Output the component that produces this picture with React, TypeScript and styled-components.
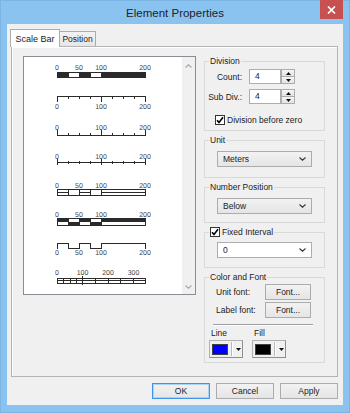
import React from 'react'
import styled, { createGlobalStyle } from 'styled-components'

const uiFont = "'Liberation Sans', Arial, sans-serif"
const ink = '#2a2a2a'

const GlobalStyle = createGlobalStyle`
  html, body {
    margin: 0;
    padding: 0;
  }
  body {
    font-family: ${uiFont};
    font-size: 8.5px;
    color: #1b1b1b;
    background: #8bc3f0;
  }
`

const Window = styled.div`
  width: 350px;
  height: 413px;
  box-sizing: border-box;
  display: flex;
  flex-direction: column;
  background: #8bc3f0;
  border: 1px solid #7cb4e3;
  padding: 0 6px 7px;
`

const TitleBar = styled.div`
  flex: none;
  height: 23px;
  display: grid;
  grid-template-columns: 1fr auto 1fr;
  align-items: start;
`

const Title = styled.div`
  grid-column: 2;
  align-self: center;
  font-size: 11.5px;
  line-height: 14px;
  color: #222;
`

const CloseButton = styled.div`
  grid-column: 3;
  justify-self: end;
  width: 23px;
  height: 19px;
  margin-top: -1px;
  background: #c75050;
  display: flex;
  align-items: center;
  justify-content: center;
`

const Client = styled.div`
  flex: 1;
  display: flex;
  flex-direction: column;
  background: #f0f0f0;
  padding: 5px 5px 6px 4px;
`

const TabStrip = styled.div`
  flex: none;
  height: 17px;
  display: flex;
  align-items: flex-end;
  margin-left: -1px;
  position: relative;
  z-index: 1;
`

const Tab = styled.div<{ $active?: boolean }>`
  box-sizing: border-box;
  display: flex;
  align-items: center;
  justify-content: center;
  border: 1px solid #acacac;
  border-bottom: 0;
  width: ${(p) => (p.$active ? 50 : 36)}px;
  height: ${(p) => (p.$active ? 18 : 15)}px;
  margin-bottom: ${(p) => (p.$active ? -1 : 0)}px;
  font-size: ${(p) => (p.$active ? 9 : 8.5)}px;
  background: ${(p) => (p.$active ? '#fff' : 'linear-gradient(#f2f2f2, #e6e6e6)')};
  & + & {
    border-left: 0;
  }
`

const Panel = styled.div`
  flex: none;
  height: 331px;
  box-sizing: border-box;
  border: 1px solid #b4b4b4;
  box-shadow: inset 1px 1px 0 #fff;
  display: flex;
  gap: 8px;
  padding: 9px 12px 0 11px;
`

const Preview = styled.div`
  width: 173px;
  height: 239px;
  box-sizing: border-box;
  border: 1px solid #8a8d94;
  background: #fff;
  display: flex;
  overflow: hidden;
`

const BarList = styled.div`
  flex: 1;
  display: flex;
  flex-direction: column;
  padding: 5px 0 0 26px;
`

const BarSvg = styled.svg`
  display: block;
  opacity: 0.995;
`

const ScrollTrack = styled.div`
  width: 13px;
  background: #f0f0f0;
  display: flex;
  flex-direction: column;
  justify-content: space-between;
  align-items: center;
  padding: 7px 0 5px;
`

const RightCol = styled.div`
  width: 121px;
  display: flex;
  flex-direction: column;
  gap: 4px;
`

const Group = styled.fieldset<{ $h: number }>`
  margin: 0;
  padding: 0;
  min-width: 0;
  box-sizing: border-box;
  height: ${(p) => p.$h}px;
  border: 1px solid #d9d9d9;
`

const Legend = styled.legend`
  margin-left: 4px;
  padding: 0 1px;
  line-height: 10px;
  display: flex;
  align-items: center;
  gap: 2px;
`

const GroupBody = styled.div<{ $pad: string }>`
  padding: ${(p) => p.$pad};
`

const SpinRow = styled.div`
  display: grid;
  grid-template-columns: 44px 32px 14px;
  align-items: center;
  height: 15px;
  & + & {
    margin-top: 5px;
  }
`

const FieldLabel = styled.span`
  grid-column: 1;
  text-align: right;
  margin: 0 7px 0 -10px;
  white-space: nowrap;
`

const TextField = styled.div`
  grid-column: 2;
  height: 15px;
  box-sizing: border-box;
  border: 1px solid #abadb3;
  background: #fff;
  padding-left: 5px;
  line-height: 13px;
`

const Spin = styled.div`
  grid-column: 3;
  height: 15px;
  display: flex;
  flex-direction: column;
`

const SpinButton = styled.div`
  flex: 1;
  box-sizing: border-box;
  border: 1px solid #acacac;
  background: linear-gradient(#f6f6f6, #e3e3e3);
  display: flex;
  align-items: center;
  justify-content: center;
  & + & {
    border-top: 0;
  }
`

const CheckRow = styled.div`
  display: flex;
  align-items: center;
  gap: 2px;
  height: 12px;
  margin-top: 10px;
  padding-left: 10px;
`

const Box = styled.span`
  width: 10px;
  height: 10px;
  box-sizing: border-box;
  border: 1px solid #333;
  background: #fff;
  display: flex;
  align-items: center;
  justify-content: center;
`

const Combo = styled.div<{ $editable?: boolean }>`
  height: 16px;
  box-sizing: border-box;
  border: 1px solid ${(p) => (p.$editable ? '#abadb3' : '#acacac')};
  background: ${(p) => (p.$editable ? '#fff' : 'linear-gradient(#f2f2f2, #e5e5e5)')};
  display: flex;
  align-items: center;
  justify-content: space-between;
  padding: 0 5px;
`

const FontGrid = styled.div`
  display: grid;
  grid-template-columns: 49px 46px;
  row-gap: 2px;
  align-items: center;
  padding: 2px 0 0 11px;
`

const PushButton = styled.div<{ $w: number; $default?: boolean }>`
  width: ${(p) => p.$w}px;
  height: 16px;
  box-sizing: border-box;
  border: 1px solid ${(p) => (p.$default ? '#3f95e6' : '#acacac')};
  box-shadow: ${(p) => (p.$default ? 'inset 0 0 0 1px #a9d3f7' : 'none')};
  background: linear-gradient(#f2f2f2, #e5e5e5);
  display: flex;
  align-items: center;
  justify-content: center;
`

const Separator = styled.div`
  margin: 6px 11px 0 8px;
  border-top: 1px solid #a0a0a0;
  border-bottom: 1px solid #fff;
`

const ColorGrid = styled.div`
  display: grid;
  grid-template-columns: 34px 34px;
  column-gap: 9px;
  row-gap: 2px;
  padding: 2px 0 0 4px;
  span {
    line-height: 10px;
    padding-left: 2px;
  }
`

const ColorButton = styled.div`
  height: 18px;
  box-sizing: border-box;
  border: 1px solid #b0b0b0;
  border-right-color: #8f8f8f;
  border-bottom-color: #8f8f8f;
  background: #f0f0f0;
  display: flex;
  align-items: center;
  padding: 0 0 0 2px;
`

const Swatch = styled.span<{ $color: string }>`
  width: 16px;
  height: 11px;
  box-sizing: border-box;
  border: 1px solid #404040;
  background: ${(p) => p.$color};
`

const SwatchArrow = styled.span`
  flex: 1;
  align-self: stretch;
  margin: 1px 0 1px 3px;
  border-left: 1px solid #b8b8b8;
  box-shadow: inset 1px 0 0 #fff;
  display: flex;
  align-items: center;
  justify-content: center;
`

const ButtonRow = styled.div`
  flex: none;
  margin-top: 6px;
  display: flex;
  justify-content: flex-end;
  gap: 6px;
`

const BarLabel = styled.text`
  font-family: ${uiFont};
  font-size: 7px;
  fill: #444;
  shape-rendering: auto;
  text-rendering: geometricPrecision;
`

const Chevron = ({ up, color = '#333' }: { up?: boolean; color?: string }) => (
  <svg width="7" height="4" viewBox="0 0 7 4">
    <path
      d={up ? 'M0.5 3.5 L3.5 0.8 L6.5 3.5' : 'M0.5 0.5 L3.5 3.2 L6.5 0.5'}
      fill="none"
      stroke={color}
      strokeWidth="1.1"
    />
  </svg>
)

const Triangle = ({ up }: { up?: boolean }) => (
  <svg width="5" height="3" viewBox="0 0 5 3">
    <polygon points={up ? '0,3 2.5,0 5,3' : '0,0 5,0 2.5,3'} fill="#111" />
  </svg>
)

const CheckBox = () => (
  <Box>
    <svg width="8" height="8" viewBox="0 0 8 8">
      <path d="M1 4.2 L3 6.4 L7 1.2" fill="none" stroke="#000" strokeWidth="1.6" />
    </svg>
  </Box>
)

const Labels = ({ y, items }: { y: number; items: [number, string][] }) => (
  <>
    {items.map(([x, t]) => (
      <BarLabel key={t} x={x} y={y} textAnchor="middle">
        {t}
      </BarLabel>
    ))}
  </>
)

// scale 0..200 runs from x=7 to x=95, sub-cells every 11px
const cells: [number, number][] = [
  [7, 18],
  [18, 29],
  [29, 40],
  [40, 51],
  [51, 95],
]
const ticks = [7, 18, 29, 40, 51, 62, 73, 84, 95]
const majors = [7, 51, 95]
const fourLabels: [number, string][] = [
  [7, '0'],
  [29, '50'],
  [51, '100'],
  [95, '200'],
]
const threeLabels: [number, string][] = [
  [7, '0'],
  [51, '100'],
  [95, '200'],
]

type Variant = 'alt' | 'tickDown' | 'tickUp' | 'tickMid' | 'hollow' | 'checker' | 'wave' | 'double'

const ScaleBar = ({ variant }: { variant: Variant }) => {
  let body: React.ReactNode = null
  if (variant === 'alt') {
    body = (
      <>
        <Labels y={8} items={fourLabels} />
        <rect x="7.5" y="10.5" width="88" height="5" fill="#fff" stroke={ink} />
        {cells
          .filter((_, i) => i % 2 === 0)
          .map(([a, b]) => (
            <rect key={a} x={a} y={10} width={b - a + 1} height={6} fill={ink} />
          ))}
      </>
    )
  } else if (variant === 'tickDown' || variant === 'tickUp' || variant === 'tickMid') {
    const lineY = variant === 'tickDown' ? 5.5 : variant === 'tickUp' ? 15.5 : 13.5
    const tickPath = ticks
      .map((x) => {
        const major = majors.includes(x)
        const xx = x + 0.5
        if (variant === 'tickDown') return `M${xx} 5 V${major ? 11 : 8}`
        if (variant === 'tickUp') return `M${xx} ${major ? 10 : 13} V16`
        return `M${xx} ${major ? 10 : 12} V${major ? 16 : 15}`
      })
      .join(' ')
    body = (
      <>
        <Labels y={variant === 'tickDown' ? 18 : 9.5} items={threeLabels} />
        <path d={`M7 ${lineY} H96 ${tickPath}`} stroke={ink} fill="none" />
      </>
    )
  } else if (variant === 'hollow') {
    body = (
      <>
        <Labels y={9.5} items={fourLabels} />
        <rect x="7.5" y="11.5" width="88" height="6" fill="#fff" stroke={ink} />
        <path
          d="M18.5 11 V18 M29.5 11 V18 M40.5 11 V18 M51.5 11 V18 M7 14.5 H18 M29 14.5 H40 M51 14.5 H95"
          stroke={ink}
        />
      </>
    )
  } else if (variant === 'checker') {
    body = (
      <>
        <Labels y={9.5} items={fourLabels} />
        <rect x="7.5" y="11.5" width="88" height="7" fill="#fff" stroke={ink} />
        {cells.map(([a, b], i) => (
          <rect key={a} x={a} y={i % 2 === 0 ? 11 : 15} width={b - a + 1} height={4} fill={ink} />
        ))}
      </>
    )
  } else if (variant === 'wave') {
    body = (
      <>
        <path
          d="M7.5 12.5 V7.5 H18.5 V12.5 H29.5 V7.5 H40.5 V12.5 H51.5 V7.5 H95.5 V12.5"
          stroke={ink}
          fill="none"
        />
        <Labels y={19} items={fourLabels} />
      </>
    )
  } else {
    body = (
      <>
        <Labels
          y={9.5}
          items={[
            [7, '0'],
            [32.5, '100'],
            [58, '200'],
            [83.5, '300'],
          ]}
        />
        <rect x="7.5" y="13.5" width="88" height="5" fill="#fff" stroke={ink} />
        <path
          d="M7 15.5 H96 M13.5 13 V19 M20.5 13 V19 M26.5 13 V19 M45.5 13 V19 M58.5 13 V19 M70.5 13 V19 M83.5 13 V19 M32.5 11 V20"
          stroke={ink}
        />
      </>
    )
  }
  return (
    <BarSvg width="110" height="29" viewBox="0 0 110 29" shapeRendering="crispEdges">
      {body}
    </BarSvg>
  )
}

const bars: Variant[] = ['alt', 'tickDown', 'tickUp', 'tickMid', 'hollow', 'checker', 'wave', 'double']

const NumberSpin = ({ label, value }: { label: string; value: string }) => (
  <SpinRow>
    <FieldLabel>{label}</FieldLabel>
    <TextField>{value}</TextField>
    <Spin>
      <SpinButton>
        <Triangle up />
      </SpinButton>
      <SpinButton>
        <Triangle />
      </SpinButton>
    </Spin>
  </SpinRow>
)

const ColorPick = ({ color }: { color: string }) => (
  <ColorButton>
    <Swatch $color={color} />
    <SwatchArrow>
      <Triangle />
    </SwatchArrow>
  </ColorButton>
)

export default function App() {
  return (
    <>
      <GlobalStyle />
      <Window>
        <TitleBar>
          <Title>Element Properties</Title>
          <CloseButton>
            <svg width="9" height="8" viewBox="0 0 9 8">
              <path d="M1 0.5 L8 7.5 M8 0.5 L1 7.5" stroke="#fff" strokeWidth="1.7" />
            </svg>
          </CloseButton>
        </TitleBar>
        <Client>
          <TabStrip>
            <Tab $active>Scale Bar</Tab>
            <Tab>Position</Tab>
          </TabStrip>
          <Panel>
            <Preview>
              <BarList>
                {bars.map((v) => (
                  <ScaleBar key={v} variant={v} />
                ))}
              </BarList>
              <ScrollTrack>
                <Chevron up color="#a8a8a8" />
                <Chevron color="#a8a8a8" />
              </ScrollTrack>
            </Preview>
            <RightCol>
              <Group $h={75}>
                <Legend>Division</Legend>
                <GroupBody $pad="3px 0 0 0">
                  <NumberSpin label="Count:" value="4" />
                  <NumberSpin label="Sub Div.:" value="4" />
                  <CheckRow>
                    <CheckBox />
                    <span>Division before zero</span>
                  </CheckRow>
                </GroupBody>
              </Group>
              <Group $h={43}>
                <Legend>Unit</Legend>
                <GroupBody $pad="6px 12px 0">
                  <Combo>
                    <span>Meters</span>
                    <Chevron />
                  </Combo>
                </GroupBody>
              </Group>
              <Group $h={41}>
                <Legend>Number Position</Legend>
                <GroupBody $pad="6px 12px 0">
                  <Combo>
                    <span>Below</span>
                    <Chevron />
                  </Combo>
                </GroupBody>
              </Group>
              <Group $h={41}>
                <Legend>
                  <CheckBox />
                  <span>Fixed Interval</span>
                </Legend>
                <GroupBody $pad="5px 12px 0">
                  <Combo $editable>
                    <span>0</span>
                    <Chevron />
                  </Combo>
                </GroupBody>
              </Group>
              <Group $h={91}>
                <Legend>Color and Font</Legend>
                <FontGrid>
                  <span>Unit font:</span>
                  <PushButton $w={46}>Font...</PushButton>
                  <span>Label font:</span>
                  <PushButton $w={46}>Font...</PushButton>
                </FontGrid>
                <Separator />
                <ColorGrid>
                  <span>Line</span>
                  <span>Fill</span>
                  <ColorPick color="#0000ff" />
                  <ColorPick color="#000" />
                </ColorGrid>
              </Group>
            </RightCol>
          </Panel>
          <ButtonRow>
            <PushButton $w={58} $default>
              OK
            </PushButton>
            <PushButton $w={58}>Cancel</PushButton>
            <PushButton $w={58}>Apply</PushButton>
          </ButtonRow>
        </Client>
      </Window>
    </>
  )
}
